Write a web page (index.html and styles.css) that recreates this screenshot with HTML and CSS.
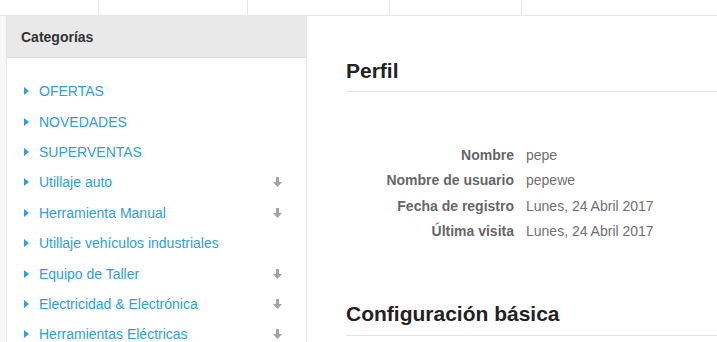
FILE: index.html
```html
<!DOCTYPE html>
<html lang="es">

<head>
    <meta charset="UTF-8">
    <meta name="viewport" content="width=device-width, initial-scale=1.0">
    <title>Perfil</title>
    <link rel="stylesheet" href="styles.css">
</head>

<body>
    <div class="topbar">
        <div class="topbar-cell cell-1"></div>
        <div class="topbar-cell cell-2"></div>
        <div class="topbar-cell cell-3"></div>
        <div class="topbar-cell cell-4"></div>
        <div class="topbar-cell cell-5"></div>
    </div>

    <div class="layout">
        <aside class="sidebar">
            <div class="sidebar-header">Categorías</div>
            <ul class="category-list">
                <li><span class="caret"></span><a href="#">OFERTAS</a></li>
                <li><span class="caret"></span><a href="#">NOVEDADES</a></li>
                <li><span class="caret"></span><a href="#">SUPERVENTAS</a></li>
                <li><span class="caret"></span><a href="#">Utillaje auto</a><svg class="expand" viewBox="0 0 9 10"><path d="M3 0h3v5h3l-4.5 5L0 5h3z"/></svg></li>
                <li><span class="caret"></span><a href="#">Herramienta Manual</a><svg class="expand" viewBox="0 0 9 10"><path d="M3 0h3v5h3l-4.5 5L0 5h3z"/></svg></li>
                <li><span class="caret"></span><a href="#">Utillaje vehículos industriales</a></li>
                <li><span class="caret"></span><a href="#">Equipo de Taller</a><svg class="expand" viewBox="0 0 9 10"><path d="M3 0h3v5h3l-4.5 5L0 5h3z"/></svg></li>
                <li><span class="caret"></span><a href="#">Electricidad &amp; Electrónica</a><svg class="expand" viewBox="0 0 9 10"><path d="M3 0h3v5h3l-4.5 5L0 5h3z"/></svg></li>
                <li><span class="caret"></span><a href="#">Herramientas Eléctricas</a><svg class="expand" viewBox="0 0 9 10"><path d="M3 0h3v5h3l-4.5 5L0 5h3z"/></svg></li>
            </ul>
        </aside>

        <main class="content">
            <h2 class="section-title">Perfil</h2>
            <dl class="profile">
                <dt>Nombre</dt>
                <dd>pepe</dd>
                <dt>Nombre de usuario</dt>
                <dd>pepewe</dd>
                <dt>Fecha de registro</dt>
                <dd>Lunes, 24 Abril 2017</dd>
                <dt>Última visita</dt>
                <dd>Lunes, 24 Abril 2017</dd>
            </dl>
            <h2 class="section-title">Configuración básica</h2>
        </main>
    </div>
</body>

</html>
```

FILE: styles.css
```css
body {
    margin: 0;
    font-family: "Liberation Sans", Arial, sans-serif;
    font-size: 14px;
    color: #333;
    background-color: #f7f7f7;
    overflow: hidden;
}

.topbar {
    display: flex;
    height: 15px;
    background-color: #fff;
    border-bottom: 1px solid #e6e6e6;
}

.topbar-cell {
    border-right: 1px solid #e6e6e6;
}

.cell-1 { width: 98px; }
.cell-2 { width: 148px; }
.cell-3 { width: 141px; }
.cell-4 { width: 131px; }
.cell-5 { flex: 1; border-right: none; }

.layout {
    display: flex;
    height: 326px;
}

.sidebar {
    width: 299px;
    margin-left: 6px;
    background-color: #fff;
    border-left: 1px solid #e6e6e6;
    border-right: 1px solid #e6e6e6;
}

.sidebar-header {
    height: 40px;
    line-height: 40px;
    padding-top: 1px;
    padding-left: 14px;
    background-color: #e9e9e9;
    border-bottom: 1px solid #dcdcdc;
    font-weight: bold;
    color: #333;
}

.category-list {
    list-style: none;
    margin: 0;
    padding: 18px 0 0 0;
}

.category-list li {
    display: flex;
    align-items: center;
    height: 30.4px;
    padding-left: 17px;
    padding-right: 24px;
}

.caret {
    width: 0;
    height: 0;
    border-left: 5px solid #2d9ee0;
    border-top: 4px solid transparent;
    border-bottom: 4px solid transparent;
    margin-right: 10px;
}

.category-list a {
    color: #2d9ee0;
    text-decoration: none;
    flex: 1;
}

.expand {
    width: 9px;
    height: 10px;
    fill: #a3a3a3;
}

.content {
    flex: 1;
    background-color: #fff;
    padding-left: 39px;
}

.section-title {
    margin: 0;
    font-size: 21px;
    font-weight: bold;
    color: #222;
    border-bottom: 1px solid #e3e3e3;
}

.section-title:first-child {
    padding-top: 43px;
    padding-bottom: 8px;
}

.section-title:last-child {
    padding-bottom: 9px;
}

.profile {
    display: grid;
    grid-template-columns: 168px auto;
    column-gap: 12px;
    row-gap: 0;
    margin: 51px 0 58px 0;
    color: #707070;
}

.profile dt {
    text-align: right;
    font-weight: bold;
    color: #666;
    line-height: 25.3px;
}

.profile dd {
    margin: 0;
    line-height: 25.3px;
}
```
